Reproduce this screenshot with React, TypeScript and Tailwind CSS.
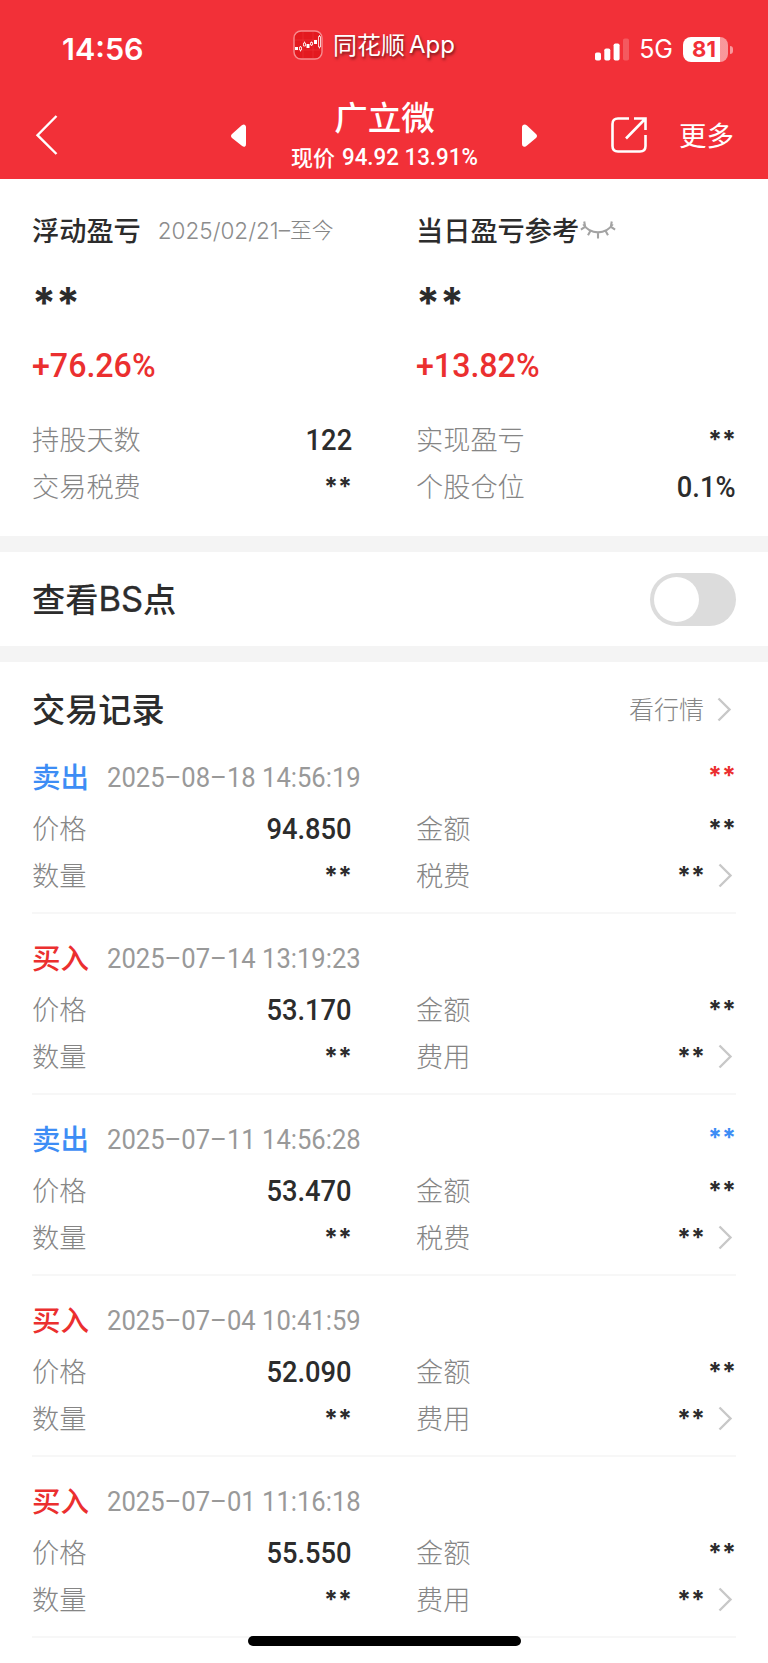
import React from 'react';

interface TradeRecord {
  side: 'buy' | 'sell';
  time: string;
  price: string;
  profit?: 'up' | 'down';
}

const records: TradeRecord[] = [
  { side: 'sell', time: '2025–08–18 14:56:19', price: '94.850', profit: 'up' },
  { side: 'buy', time: '2025–07–14 13:19:23', price: '53.170' },
  { side: 'sell', time: '2025–07–11 14:56:28', price: '53.470', profit: 'down' },
  { side: 'buy', time: '2025–07–04 10:41:59', price: '52.090' },
  { side: 'buy', time: '2025–07–01 11:16:18', price: '55.550' },
];

const Label = ({ children }: { children: React.ReactNode }) => (
  <span className="pb-[2px] text-[27.2px] font-light text-[#858585]">{children}</span>
);

const Value = ({ children }: { children: React.ReactNode }) => (
  <span className="inline-block origin-right scale-x-[0.91] font-[Roboto] text-[30px] font-medium text-[#2c2c2c]">{children}</span>
);

const Mask = ({ className = 'text-[#2c2c2c]' }: { className?: string }) => (
  <span className={`inline-block translate-y-px font-[Inter] text-[25px] font-bold ${className}`}>**</span>
);

const Field = ({ label, children }: { label: string; children: React.ReactNode }) => (
  <div className="flex h-[47px] flex-1 items-center justify-between">
    <Label>{label}</Label>
    {children}
  </div>
);

const StatusBar = () => (
  <div className="flex h-[98px] items-center">
    <span className="ml-[62px] w-[231px] font-[Inter] text-[30.5px] font-semibold">14:56</span>
    <div className="mb-[9px] flex items-center [text-shadow:1px_2px_3px_rgba(0,0,0,0.55)]">
      <AppIcon />
      <span className="-mt-[2px] ml-[10px] text-[24px]">同花顺</span>
      <span className="ml-1 font-[Inter] text-[24px]">App</span>
    </div>
    <div className="ml-auto mr-[40px] flex items-center">
      <SignalIcon />
      <span className="ml-[10px] mt-[2px] font-[Inter] text-[25px]">5G</span>
      <div className="relative ml-[10px] flex h-[25px] w-[45px] items-center justify-center rounded-[8px] bg-linear-to-r from-white from-82% to-white/50 to-82% pr-[3px] font-[Inter] text-[22px] font-bold text-[#f23038]">
        81
        <span className="absolute -right-[5px] top-[9px] h-[8px] w-[3px] rounded-r-full bg-white/50" />
      </div>
    </div>
  </div>
);

const Header = () => (
  <header className="h-[179px] bg-[#f23038] text-white">
    <StatusBar />
    <div className="flex h-[81px] items-start">
      <svg className="ml-[35px] mt-[17px]" width="24" height="42" viewBox="0 0 24 42" fill="none" stroke="white" strokeWidth="2.4"><path d="M21.500 1 2.500 20.200 21.500 39" /></svg>
      <svg className="ml-[171px] mt-[26px]" width="18" height="24" viewBox="0 0 18 24" fill="white"><path d="M2 10 11.500 1.500Q14 0 15 1Q16 2 16 3V20Q16 22 15 22.500Q14 23.500 11.500 21.500L2 14Q0 12 2 10Z" /></svg>
      <div className="flex w-[273px] flex-col items-center">
        <h1 className="-mt-[2px] text-[33.5px] leading-[40px] font-medium">广立微</h1>
        <div className="mt-[2px] flex h-[38px] items-center text-[22px] font-medium">
          <span className="-mt-[2px]">现价</span>
          <span className="-mr-[10px] ml-[7px] inline-block origin-left scale-x-[0.93] font-[Roboto] text-[24px] whitespace-nowrap">94.92 13.91%</span>
        </div>
      </div>
      <svg className="mt-[26px]" width="18" height="24" viewBox="0 0 18 24" fill="white"><path d="M15 10 6 1.500Q4 0 2 1Q1 2 1 3V20Q1 22 2.500 22.500Q4 23.500 6 21.500L15 14Q17 12 15 10Z" /></svg>
      <svg className="ml-[72px] mt-[19px]" width="38" height="38" viewBox="0 0 38 38" fill="none" stroke="white" strokeWidth="2.6"><path d="M18 1.500H7Q1.500 1.500 1.500 7V29Q1.500 34.500 7 34.500H29Q34.500 34.500 34.500 29V18M23 1.500H34.500V13M34.500 1.500 15 21.500" /></svg>
      <span className="ml-[30px] mt-[16px] text-[27.500px] leading-[40px]">更多</span>
    </div>
  </header>
);

const Summary = () => (
  <section className="flex h-[357px] gap-[64px] px-8 pt-[28px] text-[#2c2c2c]">
    <div className="w-[320px]">
      <div className="flex h-[47px] items-center">
        <h2 className="pb-[2px] text-[27.2px] font-medium">浮动盈亏</h2>
        <span className="ml-[17px] font-[Inter] text-[22.5px] font-light text-[#8c8c8c]">2025/02/21–</span>
        <span className="pb-[2px] text-[21.800px] font-light text-[#858585]">至今</span>
      </div>
      <BigMask />
      <Percent>+76.26%</Percent>
      <Field label="持股天数"><Value>122</Value></Field>
      <Field label="交易税费"><Mask /></Field>
    </div>
    <div className="flex-1">
      <div className="flex h-[47px] items-center">
        <h2 className="pb-[2px] text-[27.2px] font-medium">当日盈亏参考</h2>
        <ClosedEyeIcon />
      </div>
      <BigMask />
      <Percent>+13.82%</Percent>
      <Field label="实现盈亏"><Mask /></Field>
      <Field label="个股仓位"><Value>0.1%</Value></Field>
    </div>
  </section>
);

const BigMask = () => (
  <div className="flex h-[76px] items-center pt-[20px] font-[Inter] text-[43px] leading-none font-bold">**</div>
);

const Percent = ({ children }: { children: React.ReactNode }) => (
  <div className="flex h-[86px] items-center pb-[13px]">
    <span className="inline-block origin-left scale-x-[0.96] font-[Roboto] text-[33.5px] font-medium text-[#eb2f2f]">{children}</span>
  </div>
);

const BsToggle = () => (
  <section className="flex h-[126px] items-center justify-between border-y-[16px] border-[#f4f4f4] px-8">
    <h2 className="flex items-center text-[33.2px] font-medium text-[#2c2c2c]">
      <span className="pb-[2px]">查看</span>
      <span className="font-[Inter] text-[34.5px] font-normal [-webkit-text-stroke:0.4px_#2c2c2c]">BS</span>
      <span className="pb-[2px]">点</span>
    </h2>
    <div className="flex h-[53px] w-[86px] items-center rounded-full bg-[#dcdcdc] pl-1">
      <div className="size-[45px] rounded-full bg-white" />
    </div>
  </section>
);

const RecordItem = ({ record }: { record: TradeRecord }) => {
  const isSell = record.side === 'sell';

  return (
    <li className="h-[181px] border-b-2 border-[#f7f7f7] pt-[18px]">
      <div className="flex h-[54px] items-center">
        <span className={`pb-[3px] text-[28.5px] font-medium ${isSell ? 'text-[#3d8df5]' : 'text-[#eb2f2f]'}`}>
          {isSell ? '卖出' : '买入'}
        </span>
        <span className="ml-[18px] inline-block origin-left scale-x-[0.914] font-[Roboto] text-[28px] text-[#999]">{record.time}</span>
        {record.profit && (
          <span className="-mt-[4px] ml-auto">
            <Mask className={record.profit === 'up' ? 'text-[#eb2f2f]' : 'text-[#3d8df5]'} />
          </span>
        )}
      </div>
      <div className="flex gap-[64px]">
        <div className="w-[320px]">
          <Field label="价格"><Value>{record.price}</Value></Field>
          <Field label="数量"><Mask /></Field>
        </div>
        <div className="flex-1">
          <Field label="金额"><Mask /></Field>
          <Field label={isSell ? '税费' : '费用'}>
            <span className="-mr-px flex items-center">
              <Mask />
              <ChevronIcon />
            </span>
          </Field>
        </div>
      </div>
    </li>
  );
};

const AppIcon = () => (
  <svg width="30" height="30" viewBox="0 0 30 30" fill="none">
    <rect x="1" y="1" width="28" height="28" rx="7" fill="#e3191f" stroke="#f78c8f" strokeWidth="1.4" />
    <path d="M10 2V28M20 2V28M2 10H28M2 20H28" stroke="#ef3a3e" strokeWidth="0.5" />
    <path d="M2 17H5V20H2ZM13.500 14H16.500V18H13.500ZM21 10H24V14H21Z" fill="white" />
    <path d="M6.500 17H8.500V20H6.500ZM7.500 16V17M7.500 20V21.500M10.500 13H12.500V16H10.500ZM11.500 11.500V13M17.500 12.500H19.500V15H17.500ZM18.500 11.500V12.500M18.500 15V16M25.500 6.500H27.500V17H25.500ZM26.500 5V6.500M26.500 17V18.500" stroke="white" strokeWidth="0.8" />
  </svg>
);

const SignalIcon = () => (
  <svg className="mt-px" width="34" height="23" viewBox="0 0 34 23" fill="white">
    <rect x="0" y="14.500" width="6" height="8" rx="1.800" />
    <rect x="9.300" y="10.500" width="6" height="12" rx="1.800" />
    <rect x="18.600" y="5.500" width="6" height="17" rx="1.800" />
    <rect x="28" y="0.500" width="6" height="22" rx="1.800" opacity="0.2" />
  </svg>
);

const ClosedEyeIcon = () => (
  <svg className="-mt-[2px]" width="38" height="24" viewBox="0 0 40 24" fill="none" stroke="#a3a3a3" strokeWidth="2.2">
    <path d="M4.500 6Q10 14.500 20 14.500T35.500 6M5.500 3 6.500 8.500 2 11.500M34.500 3 33.500 8.500 38 11.500M12.500 12 9.500 17.500M20 14.500V21M27.500 12 30.500 17.500" />
  </svg>
);

const ChevronIcon = () => (
  <svg className="ml-[13px] mr-[4px]" width="15" height="25" viewBox="0 0 15 25" fill="none" stroke="#c8c8c8" strokeWidth="2.400">
    <path d="M1.500 1.500 12.500 12.500 1.500 23.500" />
  </svg>
);

const App: React.FC = () => {
  return (
    <div className="relative h-[1663px] w-[768px] overflow-hidden bg-white font-['Noto_Sans_CJK_SC',sans-serif]">
      <Header />
      <Summary />
      <BsToggle />
      <section className="px-8">
        <div className="flex h-[71px] items-center justify-between pt-[23px]">
          <h2 className="pb-[3px] text-[33.2px] font-medium text-[#2c2c2c]">交易记录</h2>
          <div className="flex items-center">
            <span className="text-[25px] font-light text-[#858585]">看行情</span>
            <ChevronIcon />
          </div>
        </div>
        <ul>
          {records.map((record) => (
            <RecordItem key={record.time} record={record} />
          ))}
        </ul>
      </section>
      <div className="absolute bottom-[17px] left-[248px] h-[10px] w-[273px] rounded-full bg-black" />
    </div>
  );
};

export default App;
